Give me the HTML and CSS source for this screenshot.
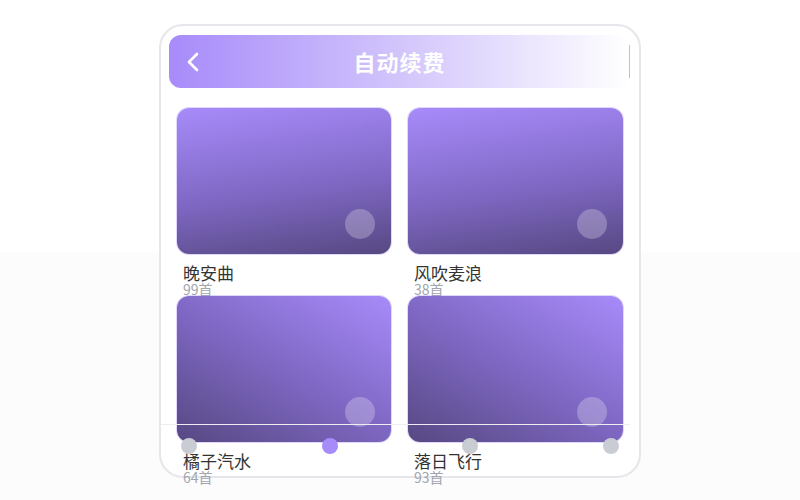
FILE: index.html
```html
<!DOCTYPE html>
<html>
<head>
<meta charset="utf-8">
<title>自动续费</title>
<link rel="stylesheet" href="styles.css">
</head>
<body>
<div class="phone">
  <div class="topbar">
    <svg class="back" width="14" height="22" viewBox="0 0 14 22">
      <path d="M11 3 L3 11 L11 19" fill="none" stroke="#fff" stroke-width="2.6" stroke-linecap="round" stroke-linejoin="round"/>
    </svg>
    <div class="title">自动续费</div>
  </div>

  <div class="grid">
    <div class="item">
      <div class="cover cover-a"><span class="play"></span></div>
      <div class="name">晚安曲</div>
      <div class="count">99首</div>
    </div>
    <div class="item">
      <div class="cover cover-a"><span class="play"></span></div>
      <div class="name">风吹麦浪</div>
      <div class="count">38首</div>
    </div>
    <div class="item">
      <div class="cover cover-b"><span class="play"></span></div>
      <div class="name">橘子汽水</div>
      <div class="count">64首</div>
    </div>
    <div class="item">
      <div class="cover cover-b"><span class="play"></span></div>
      <div class="name">落日飞行</div>
      <div class="count">93首</div>
    </div>
  </div>

  <div class="slider-line"></div>
  <div class="dots">
    <span class="dot"></span>
    <span class="dot on"></span>
    <span class="dot"></span>
    <span class="dot"></span>
  </div>
</div>
</body>
</html>
```

FILE: styles.css
```css
html{
height:100%;
background:linear-gradient(#ffffff 252px, #fcfcfd 252px) no-repeat;
background-color:#fcfcfd;
}

body{
margin:0;
min-height:500px;
font-family:"Noto Sans CJK SC", "Noto Sans", sans-serif;
}

.phone{
position:relative;
box-sizing:border-box;
width:482px;
height:454px;
margin:24px auto 0;
padding:9px 9px 0 8px;
border:2px solid #e6e6eb;
border-radius:24px;
background:#ffffff;
}

.topbar{
position:relative;
display:flex;
align-items:center;
height:53px;
padding-left:17px;
border-radius:12px;
background:linear-gradient(to right, #a78bfa 0%, #c9b9fb 40%, #ffffff 100%);
}

.topbar:after{
content:"";
position:absolute;
right:0;
top:10px;
bottom:10px;
width:1px;
background:#c4b5fd;
}

.back{
display:block;
}

.title{
position:absolute;
left:0;
right:0;
top:50%;
transform:translateY(-52%);
text-align:center;
color:#ffffff;
font-size:22px;
font-weight:bold;
letter-spacing:1px;
}

.grid{
display:grid;
grid-template-columns:214px 215px;
column-gap:17px;
margin-top:20px;
padding:0 7px 0 8px;
}

.item{
position:relative;
z-index:1;
}

.cover{
position:relative;
height:146px;
border-radius:12px;
box-shadow:0 0 0 1px rgba(167,139,250,0.35);
}

.cover-a{
background:linear-gradient(172deg, #a78bfa 0%, #7f68c4 55%, #574882 100%);
}

.cover-b{
background:linear-gradient(210deg, #a78bfa 0%, #7f68c4 50%, #574882 100%);
}

.play{
position:absolute;
right:16px;
bottom:15px;
width:30px;
height:30px;
border-radius:50%;
background:rgba(255,255,255,0.25);
}

.name{
margin-top:9px;
padding-left:6px;
font-size:17px;
line-height:20px;
color:#333333;
}

.count{
padding-left:6px;
font-size:14px;
line-height:14px;
margin-top:-1px;
color:#a1a5ad;
}

.slider-line{
position:absolute;
z-index:2;
left:0;
top:398px;
width:469px;
height:1px;
background:#eeeef2;
}

.dots{
position:absolute;
z-index:2;
left:20px;
top:412px;
width:438px;
display:flex;
justify-content:space-between;
}

.dot{
width:16px;
height:16px;
border-radius:50%;
background:#c9cdd3;
}

.dot.on{
background:#a78bfa;
}
```
